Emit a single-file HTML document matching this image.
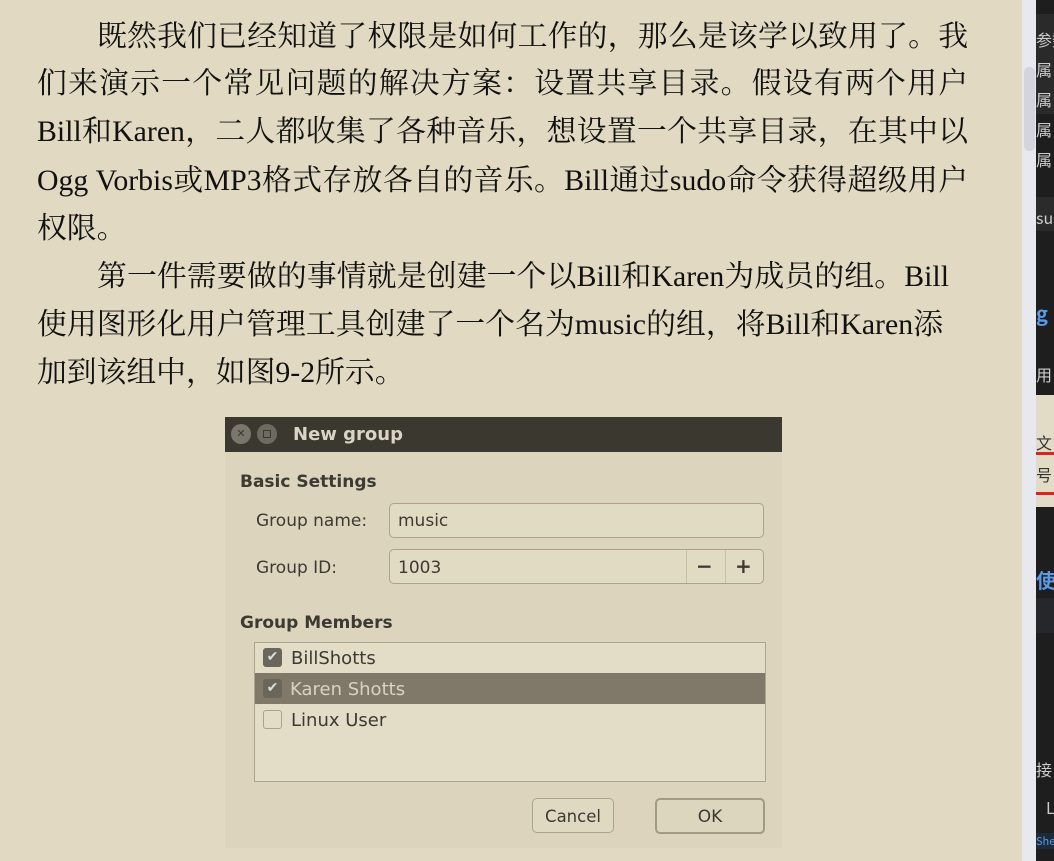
<!DOCTYPE html>
<html><head><meta charset="utf-8"><style>
*{margin:0;padding:0;box-sizing:border-box}
body{width:1054px;height:861px;overflow:hidden;background:#e1d9c1;position:relative;font-family:"Liberation Serif","Noto Serif CJK SC",serif;color:#111}
.l{position:absolute;left:37px;width:931px;font-size:29.8px;line-height:48px;white-space:nowrap;text-align:justify;text-align-last:justify}
.nj{text-align-last:left}
.u{font-family:"DejaVu Sans","Liberation Sans",sans-serif;position:absolute;color:#3d3a33;white-space:nowrap}
#strip{position:absolute;left:1022px;top:0;width:14px;height:861px;background:#e8e8ef}
#thumb{position:absolute;left:1024px;top:67px;width:11px;height:84px;background:#d4d4dc;border-radius:5px}
#dark{position:absolute;left:1036px;top:0;width:18px;height:861px;background:#1e1e1e;overflow:hidden;font-family:"Noto Sans CJK SC",sans-serif;color:#ccc;font-size:16px}
#dark div{position:absolute;left:0;white-space:nowrap}
</style></head><body>
<div class="l" style="top:13px;padding-left:60px">既然我们已经知道了权限是如何工作的，那么是该学以致用了。我</div>
<div class="l" style="top:60px">们来演示一个常见问题的解决方案：设置共享目录。假设有两个用户</div>
<div class="l" style="top:108px">Bill和Karen，二人都收集了各种音乐，想设置一个共享目录，在其中以</div>
<div class="l" style="top:157px">Ogg Vorbis或MP3格式存放各自的音乐。Bill通过sudo命令获得超级用户</div>
<div class="l nj" style="top:205px">权限。</div>
<div class="l" style="top:253px;padding-left:60px;width:912px">第一件需要做的事情就是创建一个以Bill和Karen为成员的组。Bill</div>
<div class="l" style="top:301px;width:906px">使用图形化用户管理工具创建了一个名为music的组，将Bill和Karen添</div>
<div class="l nj" style="top:349px">加到该组中，如图9-2所示。</div>

<div style="position:absolute;left:225px;top:417px;width:557px;height:431px;background:#dcd4bc"></div>
<div style="position:absolute;left:225px;top:417px;width:557px;height:35px;background:#3b3830"></div>
<div style="position:absolute;left:231px;top:424px;width:20px;height:20px;border-radius:50%;background:#7a766c;color:#3b3830;font:bold 11px 'DejaVu Sans',sans-serif;text-align:center;line-height:20px">✕</div>
<div style="position:absolute;left:257px;top:424px;width:20px;height:20px;border-radius:50%;background:#6e6a60"><div style="position:absolute;left:6px;top:6px;width:8px;height:8px;border:1px solid #3b3830"></div></div>
<div class="u" style="left:293px;top:424px;font-size:18px;font-weight:bold;color:#d9d4c6">New group</div>
<div class="u" style="left:240px;top:472px;font-size:17px;font-weight:bold">Basic Settings</div>
<div class="u" style="left:256px;top:511px;font-size:17px">Group name:</div>
<div style="position:absolute;left:389px;top:503px;width:375px;height:35px;border:1px solid #aaa48f;border-radius:5px;background:#e2dbc4"></div>
<div class="u" style="left:398px;top:511px;font-size:17px">music</div>
<div class="u" style="left:256px;top:558px;font-size:17px">Group ID:</div>
<div style="position:absolute;left:389px;top:549px;width:375px;height:35px;border:1px solid #aaa48f;border-radius:5px;background:#e2dbc4"></div>
<div style="position:absolute;left:686px;top:550px;width:1px;height:33px;background:#c8c0a8"></div>
<div style="position:absolute;left:725px;top:550px;width:1px;height:33px;background:#c8c0a8"></div>
<div class="u" style="left:398px;top:558px;font-size:17px">1003</div>
<div class="u" style="left:696px;top:554px;font-size:20px;font-weight:bold">−</div>
<div class="u" style="left:735px;top:554px;font-size:20px;font-weight:bold">+</div>
<div class="u" style="left:240px;top:613px;font-size:17px;font-weight:bold">Group Members</div>
<div style="position:absolute;left:254px;top:642px;width:512px;height:140px;border:1px solid #aaa48f;background:#e3dcc6"></div>
<div style="position:absolute;left:255px;top:673px;width:510px;height:31px;background:#80796a"></div>
<div style="position:absolute;left:263px;top:648px;width:19px;height:19px;border-radius:3px;background:#6b665a;color:#ddd;font-size:14px;text-align:center;line-height:19px">✔</div>
<div style="position:absolute;left:263px;top:679px;width:19px;height:19px;border-radius:3px;background:#6b665a;color:#ddd;font-size:14px;text-align:center;line-height:19px">✔</div>
<div style="position:absolute;left:263px;top:710px;width:19px;height:19px;border-radius:3px;border:1px solid #a8a290"></div>
<div class="u" style="left:291px;top:648px;font-size:18px">BillShotts</div>
<div class="u" style="left:290px;top:679px;font-size:18px;color:#d8d2c2">Karen Shotts</div>
<div class="u" style="left:291px;top:710px;font-size:18px">Linux User</div>
<div style="position:absolute;left:532px;top:798px;width:82px;height:35px;border:1px solid #aaa48f;border-radius:5px;background:#e0d9c2"></div>
<div class="u" style="left:532px;width:82px;text-align:center;top:807px;font-size:16.5px">Cancel</div>
<div style="position:absolute;left:655px;top:798px;width:110px;height:36px;border:2px solid #a09a86;border-radius:5px;background:#ddd6bf"></div>
<div class="u" style="left:655px;width:110px;text-align:center;top:807px;font-size:17px">OK</div>

<div id="strip"></div><div id="thumb"></div>
<div id="dark">
<div style="top:14px;height:100px;width:18px;background:#2a2a2a"></div>
<div style="top:27px">参数</div><div style="top:57px">属</div><div style="top:87px">属</div><div style="top:117px">属</div><div style="top:147px">属</div>
<div style="top:197px;height:34px;width:18px;background:#2b2b2b"></div><div style="top:205px">su</div>
<div style="top:298px;color:#5a9ae6;font-weight:bold;font-size:20px">g</div>
<div style="top:362px">用</div>
<div style="top:395px;height:112px;width:18px;background:#e2dbc5"></div>
<div style="top:430px;color:#333">文</div>
<div style="top:462px;color:#333">号</div>
<div style="top:452px;height:3px;width:18px;background:#d22"></div>
<div style="top:492px;height:3px;width:18px;background:#d22"></div>
<div style="top:565px;color:#5a9ae6;font-weight:bold;font-size:20px">使</div>
<div style="top:598px;height:35px;width:18px;background:#25272b"></div>
<div style="top:757px">接</div>
<div style="top:795px;left:10px">L</div>
<div style="top:833px;font-size:11px;color:#5a9ae6;background:#1c2a3a">She</div>
</div>
</body></html>
